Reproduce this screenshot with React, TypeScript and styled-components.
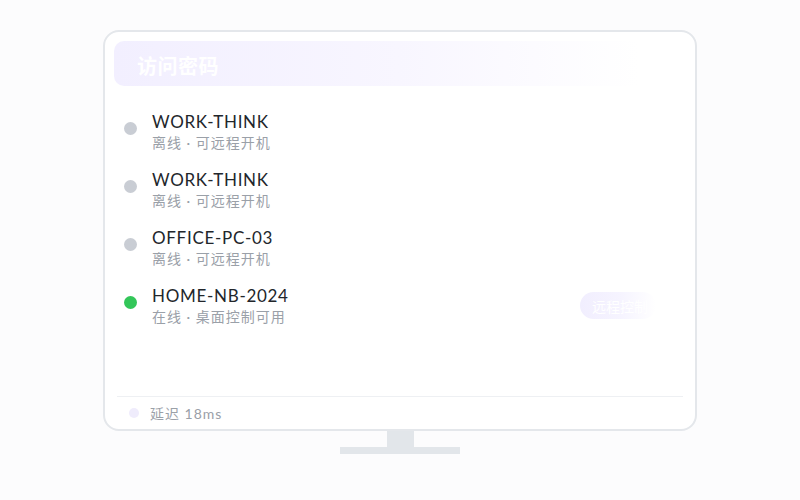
import React from "react";
import styled, { createGlobalStyle } from "styled-components";

type Device = { id: number; name: string; status: string; online: boolean };

const devices: Device[] = [
  { id: 1, name: "WORK-THINK", status: "离线 · 可远程开机", online: false },
  { id: 2, name: "WORK-THINK", status: "离线 · 可远程开机", online: false },
  { id: 3, name: "OFFICE-PC-03", status: "离线 · 可远程开机", online: false },
  { id: 4, name: "HOME-NB-2024", status: "在线 · 桌面控制可用", online: true },
];

const GlobalStyle = createGlobalStyle`
  html, body {
    margin: 0;
    padding: 0;
    background: #fcfcfd;
    font-family: Lato, "Noto Sans CJK SC", sans-serif;
  }
`;

export default function App() {
  return (
    <>
      <GlobalStyle />
      <Page>
        <Monitor>
          <Screen>
            <Header>
              <HeaderTitle>访问密码</HeaderTitle>
            </Header>
            <List>
              {devices.map((d) => (
                <Row key={`device-${d.id}`}>
                  <Dot $online={d.online} />
                  <Info>
                    <Name>{d.name}</Name>
                    <Status>{d.status}</Status>
                  </Info>
                  {d.online && <ControlButton>远程控制</ControlButton>}
                </Row>
              ))}
            </List>
            <Footer>
              <FooterDot />
              <Latency>延迟 18ms</Latency>
            </Footer>
          </Screen>
          <Neck />
          <Base />
        </Monitor>
      </Page>
    </>
  );
}

const Page = styled.div`
  width: 800px;
  height: 500px;
  display: flex;
  justify-content: center;
  padding-top: 30px;
  box-sizing: border-box;
  background: #fcfcfd;
`;

const Monitor = styled.div`
  display: flex;
  flex-direction: column;
  align-items: center;
`;

const Screen = styled.div`
  width: 594px;
  height: 401px;
  box-sizing: border-box;
  border: 2px solid #e4e7eb;
  border-radius: 16px;
  background: #ffffff;
  padding: 9px 9px 0 9px;
  display: flex;
  flex-direction: column;
`;

const Header = styled.div`
  height: 45px;
  flex-shrink: 0;
  border-radius: 10px;
  background: linear-gradient(90deg, #f2efff 0%, #f8f6ff 50%, #ffffff 92%);
  display: flex;
  align-items: center;
  padding: 3px 0 0 23px;
  box-sizing: border-box;
  margin-right: 1px;
`;

const HeaderTitle = styled.span`
  color: #ffffff;
  font-family: "Noto Sans CJK SC", sans-serif;
  font-size: 20px;
  font-weight: 700;
  letter-spacing: 0.5px;
`;

const List = styled.div`
  display: flex;
  flex-direction: column;
  gap: 14px;
  padding: 25px 0 0 10px;
  flex: 1;
`;

const Row = styled.div`
  display: flex;
  align-items: flex-start;
  height: 44px;
`;

const Dot = styled.span<{ $online: boolean }>`
  width: 13px;
  height: 13px;
  border-radius: 50%;
  background: ${(p) => (p.$online ? "#33c659" : "#c9cdd4")};
  margin: 11px 15px 0 0;
  flex-shrink: 0;
`;

const Info = styled.div`
  display: flex;
  flex-direction: column;
  flex: 1;
`;

const Name = styled.span`
  font-size: 17px;
  line-height: 21px;
  letter-spacing: 0.7px;
  color: #22262b;
`;

const Status = styled.span`
  font-size: 14px;
  line-height: 21px;
  letter-spacing: 1px;
  color: #9aa0a8;
`;

const ControlButton = styled.button`
  border: none;
  outline: none;
  height: 27px;
  width: 76px;
  margin: 7px 30px 0 0;
  border-radius: 14px;
  padding: 0 0 0 12px;
  text-align: left;
  white-space: nowrap;
  overflow: hidden;
  background: linear-gradient(90deg, #f1eefe 0%, #f6f4ff 55%, #ffffff 100%);
  color: #ffffff;
  font-family: "Liberation Serif", "Noto Sans CJK SC", serif;
  font-size: 14px;
`;

const Footer = styled.div`
  height: 33px;
  flex-shrink: 0;
  box-sizing: border-box;
  margin: 0 3px;
  border-top: 1px solid #eef0f3;
  display: flex;
  align-items: center;
  padding-left: 12px;
`;

const FooterDot = styled.span`
  width: 10px;
  height: 10px;
  border-radius: 50%;
  background: #efecfc;
  margin-right: 11px;
`;

const Latency = styled.span`
  font-size: 14px;
  letter-spacing: 1px;
  color: #9aa0a8;
`;

const Neck = styled.div`
  width: 27px;
  height: 16px;
  background: #e2e6ea;
`;

const Base = styled.div`
  width: 120px;
  height: 7px;
  background: #e2e6ea;
`;
